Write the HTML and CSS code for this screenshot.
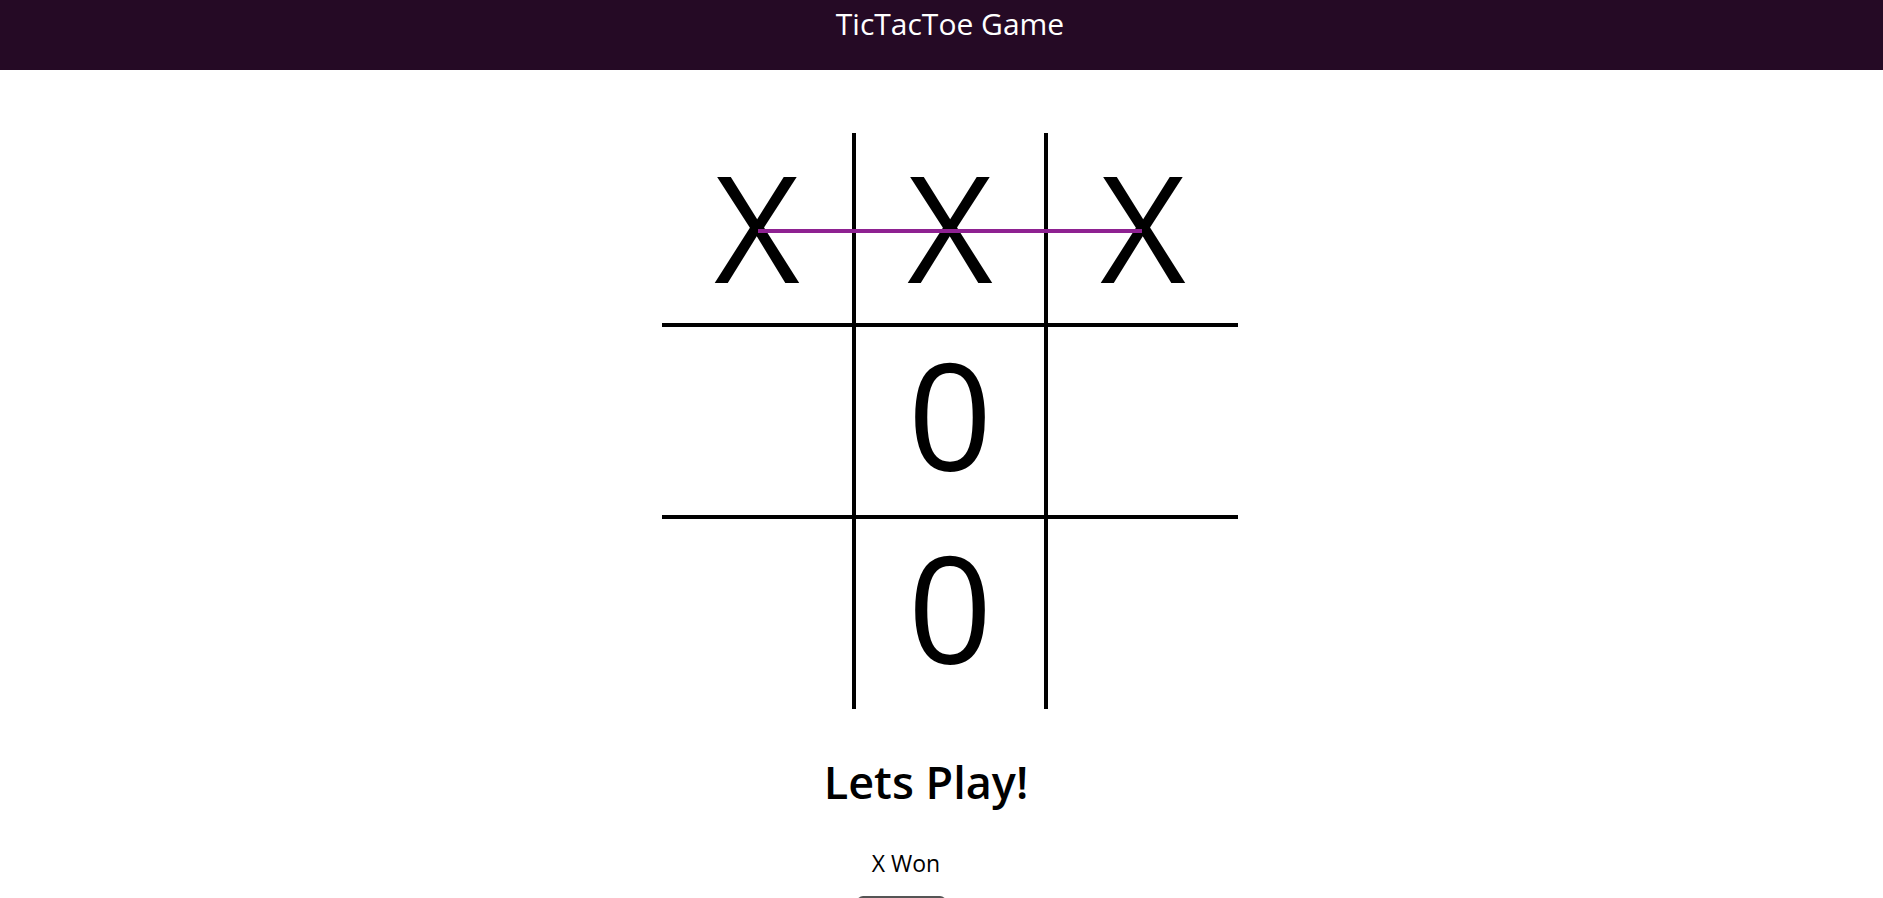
FILE: index.html
```html
<!DOCTYPE html>
<html lang="en">
<head>
<meta charset="utf-8">
<title>TicTacToe Game</title>
<link rel="stylesheet" href="styles.css">
</head>
<body>
<header class="topbar">
  <h1 class="title">TicTacToe Game</h1>
</header>
<main class="game">
  <div class="board">
    <div class="cell c-left r-top">X</div>
    <div class="cell c-mid r-top">X</div>
    <div class="cell c-right r-top">X</div>
    <div class="cell c-left r-mid"></div>
    <div class="cell c-mid r-mid o">0</div>
    <div class="cell c-right r-mid"></div>
    <div class="cell c-left r-bot"></div>
    <div class="cell c-mid r-bot o">0</div>
    <div class="cell c-right r-bot"></div>
    <div class="win-line"></div>
  </div>
  <h2 class="status">Lets Play!</h2>
  <p class="result">X Won</p>
  <button class="reset">Reset</button>
</main>
</body>
</html>
```

FILE: styles.css
```css
html, body {
  margin: 0;
  padding: 0;
  background: #ffffff;
  font-family: "Open Sans", "Noto Sans", sans-serif;
  color: #000;
}

.topbar {
  height: 70px;
  background: #250a25;
  display: flex;
  align-items: center;
  justify-content: center;
  padding-left: 17px;
}

.title {
  margin: 0;
  color: #ffffff;
  font-size: 30px;
  font-weight: 400;
  line-height: 1;
  margin-top: -22px;
}

.game {
  display: flex;
  flex-direction: column;
  align-items: center;
  padding-left: 17px;
}

.board {
  position: relative;
  margin-top: 63px;
  display: grid;
  grid-template-columns: repeat(3, 192px);
  grid-template-rows: repeat(3, 192px);
}

.cell {
  box-sizing: border-box;
  display: flex;
  align-items: center;
  justify-content: center;
  font-size: 148px;
  line-height: 1;
  font-weight: 500;
  padding-bottom: 4px;
}

.cell.o {
  padding-top: 0;
  padding-bottom: 15px;
}

.c-left { border-right: 2px solid #000; }
.c-mid { border-left: 2px solid #000; border-right: 2px solid #000; }
.c-right { border-left: 2px solid #000; }
.r-top { border-bottom: 2px solid #000; }
.r-mid { border-top: 2px solid #000; border-bottom: 2px solid #000; }
.r-bot { border-top: 2px solid #000; }

.win-line {
  position: absolute;
  left: 96px;
  top: 96px;
  width: 384px;
  height: 4px;
  background: #8e2191;
}

.status {
  margin: 46px 48px 0 0;
  font-size: 45px;
  font-weight: 600;
  line-height: 1.2;
}

.result {
  margin: 41px 88px 0 0;
  font-size: 23px;
  line-height: 1.2;
}

.reset {
  margin: 18px 98px 0 0;
  width: 89px;
  height: 40px;
  border: none;
  border-radius: 6px;
  background: #555555;
  color: #fff;
  font-family: inherit;
  font-size: 16px;
}
```
